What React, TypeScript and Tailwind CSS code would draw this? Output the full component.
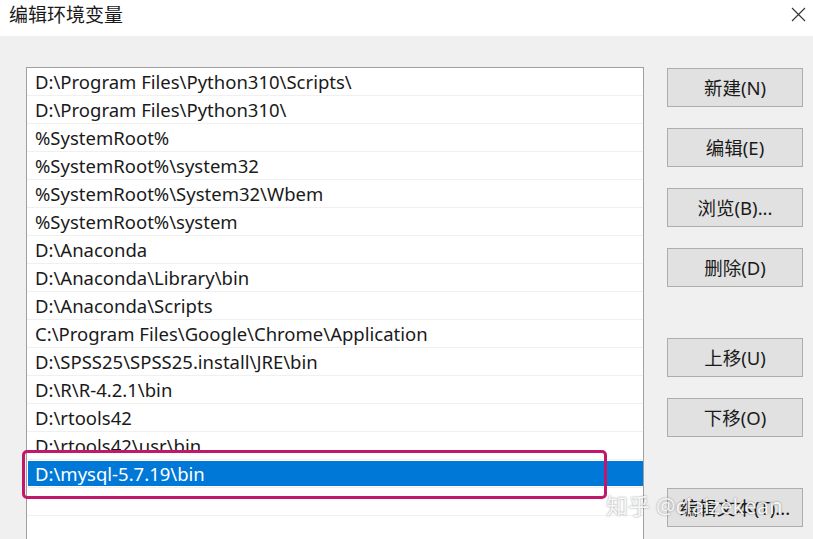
import React from 'react';

const paths = [
  'D:\\Program Files\\Python310\\Scripts\\',
  'D:\\Program Files\\Python310\\',
  '%SystemRoot%',
  '%SystemRoot%\\system32',
  '%SystemRoot%\\System32\\Wbem',
  '%SystemRoot%\\system',
  'D:\\Anaconda',
  'D:\\Anaconda\\Library\\bin',
  'D:\\Anaconda\\Scripts',
  'C:\\Program Files\\Google\\Chrome\\Application',
  'D:\\SPSS25\\SPSS25.install\\JRE\\bin',
  'D:\\R\\R-4.2.1\\bin',
  'D:\\rtools42',
  'D:\\rtools42\\usr\\bin',
  'D:\\mysql-5.7.19\\bin',
  '',
  '',
];

const SELECTED = 14;

const font = { fontFamily: '"Noto Sans", "Noto Sans CJK SC", sans-serif' };

const Btn = ({ label, top }: { label: string; top: number }) => (
  <button
    className="w-[136px] h-[39px] shrink-0 border border-[#adadad] bg-[#e1e1e1] text-[18.5px] text-[#1a1a1a] flex items-center justify-center"
    style={{ marginTop: top }}
  >
    {label}
  </button>
);

export default function App() {
  return (
    <div className="w-[813px] h-[539px] overflow-hidden bg-[#f0f0f0] flex flex-col relative" style={font}>
      {/* 标题栏 */}
      <div className="h-[36px] shrink-0 bg-white flex items-center justify-between pl-[9px] pr-[7px]">
        <span className="text-[19px] text-[#1a1a1a] leading-none -mt-[6px]">编辑环境变量</span>
        <svg width="15" height="15" viewBox="0 0 15 15" className="-mt-[8px]">
          <path d="M1 1L14 14M14 1L1 14" stroke="#333" strokeWidth="1.1" />
        </svg>
      </div>

      <div className="flex flex-1 pt-[31px] pl-[26px] min-h-0">
        {/* 列表 */}
        <div className="w-[618px] h-[520px] shrink-0 bg-white border border-[#a0a0a0] border-b-0 overflow-hidden">
          {paths.map((p, i) => (
            <div key={i} className="h-[28px] border-b border-[#f0f0f0] flex">
              {i === SELECTED ? (
                <div className="flex-1 my-[1px] ml-[1px] bg-[#0078d7] text-white text-[18.5px] pl-[7px] pt-[1px] flex items-center">
                  {p}
                </div>
              ) : (
                <div className="flex-1 text-[18.5px] text-[#1a1a1a] pl-[8px] pt-[1px] flex items-center whitespace-nowrap">
                  {p}
                </div>
              )}
            </div>
          ))}
        </div>

        {/* 按钮 */}
        <div className="flex flex-col ml-[23px]">
          <Btn label="新建(N)" top={1} />
          <Btn label="编辑(E)" top={21} />
          <Btn label="浏览(B)..." top={21} />
          <Btn label="删除(D)" top={21} />
          <Btn label="上移(U)" top={51} />
          <Btn label="下移(O)" top={21} />
          <Btn label="编辑文本(T)..." top={51} />
        </div>
      </div>

      {/* 高亮框 */}
      <div className="absolute left-[22px] top-[450px] w-[585px] h-[49px] border-[3px] border-[#c2186a] rounded-[5px]" />

      {/* 水印 */}
      <div
        className="absolute left-[606px] top-[489px] text-[22px] text-white/90 whitespace-nowrap"
        style={{ textShadow: '0 0 2px rgba(0,0,0,0.45)' }}
      >
        知乎 @claizekean
      </div>
    </div>
  );
}
